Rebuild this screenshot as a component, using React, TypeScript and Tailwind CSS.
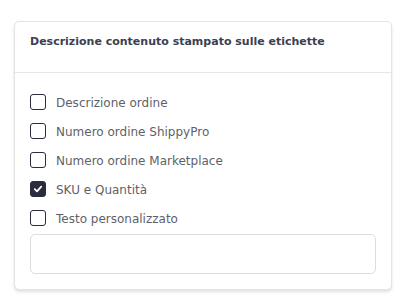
import React from 'react';

const options = [
  { label: 'Descrizione ordine', checked: false },
  { label: 'Numero ordine ShippyPro', checked: false },
  { label: 'Numero ordine Marketplace', checked: false },
  { label: 'SKU e Quantità', checked: true },
  { label: 'Testo personalizzato', checked: false },
];

const CheckRow = ({ label, checked }: { label: string; checked: boolean }) => (
  <label className="flex items-center h-[29px] cursor-pointer">
    <span
      className={
        checked
          ? 'shrink-0 w-4 h-4 rounded-[3px] bg-[#2a2b3f] border-[1.5px] border-[#2a2b3f] flex items-center justify-center'
          : 'shrink-0 w-4 h-4 rounded-[3px] bg-white border-[1.5px] border-[#2a2b3f]'
      }
    >
      {checked && (
        <svg width="10" height="10" viewBox="0 0 10 10" fill="none">
          <path d="M1.8 5.2 L4 7.3 L8.2 2.6" stroke="white" strokeWidth="1.8" strokeLinecap="round" strokeLinejoin="round" />
        </svg>
      )}
    </span>
    <span className="ml-[10px] text-[12px] text-[#5f5f69] pt-[3px]">{label}</span>
  </label>
);

export default function App() {
  return (
    <div className="w-[404px] h-[307px] bg-white pt-[21px] px-[14px]" style={{ fontFamily: '"DejaVu Sans", sans-serif' }}>
      <div className="w-[378px] bg-white border border-[#e3e4e8] rounded-[5px] shadow-[0_2px_3px_rgba(0,0,0,0.12)]">
        <div className="h-[51px] pt-[12px] px-[15px] border-b border-[#e6e7eb]">
          <h3 className="text-[11px] font-bold text-[#3a4150]">Descrizione contenuto stampato sulle etichette</h3>
        </div>
        <div className="pt-[20px] pb-[15px] px-[15px]">
          <div className="flex flex-col -mt-[6px]">
            {options.map(o => (
              <CheckRow key={o.label} label={o.label} checked={o.checked} />
            ))}
          </div>
          <input
            type="text"
            className="mt-[2px] w-full h-[40px] border border-[#dcdde2] rounded-[5px] px-3 text-[13px] outline-none"
          />
        </div>
      </div>
    </div>
  );
}
